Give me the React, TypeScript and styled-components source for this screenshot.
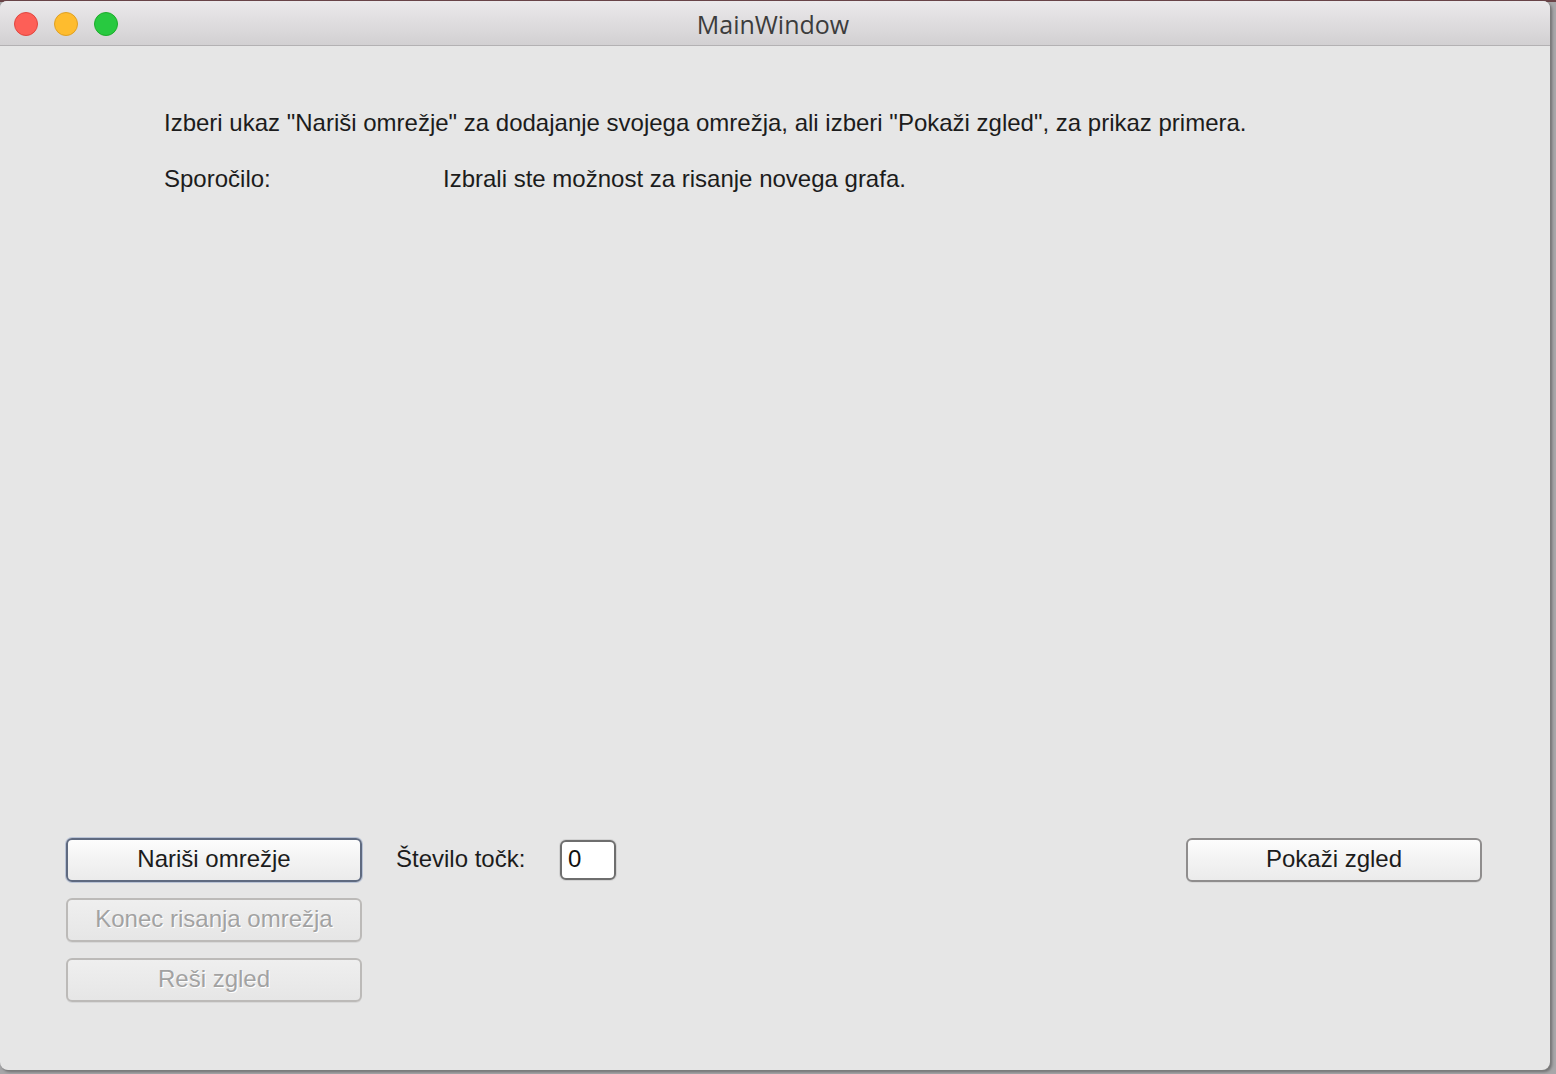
import React from "react";
import styled, { createGlobalStyle } from "styled-components";

const GlobalStyle = createGlobalStyle`
  html, body {
    margin: 0;
    padding: 0;
    width: 1556px;
    height: 1074px;
    overflow: hidden;
    background: #a9a9ab;
  }
  #root { width: 1556px; height: 1074px; }
  * { box-sizing: border-box; }
`;

const Desktop = styled.div`
  width: 1556px;
  height: 1074px;
  background: linear-gradient(#6a4448 0, #6a4448 2px, #a7a7a9 2px);
  position: relative;
  overflow: hidden;
`;

const Window = styled.div`
  position: absolute;
  left: 0;
  top: 1px;
  width: 1550px;
  height: 1069px;
  display: flex;
  flex-direction: column;
  background: #e6e6e6;
  border-radius: 7px 7px 8px 8px;
  box-shadow: 1px 1px 0 #7c7c7c, 2px 2px 3px rgba(0, 0, 0, 0.35);
  overflow: hidden;
  font-family: "Liberation Sans", Arial, sans-serif;
`;

const TitleBar = styled.div`
  height: 45px;
  flex: none;
  display: flex;
  align-items: center;
  position: relative;
  background: linear-gradient(#ebe9eb, #d2d0d2);
  border-bottom: 1px solid #b3b1b3;
`;

const Lights = styled.div`
  display: flex;
  gap: 16px;
  padding-left: 14px;
  padding-top: 1px;
`;

const Light = styled.span<{ $fill: string; $edge: string }>`
  width: 24px;
  height: 24px;
  border-radius: 50%;
  background: ${(p) => p.$fill};
  border: 1px solid ${(p) => p.$edge};
`;

const Title = styled.div`
  position: absolute;
  left: 0;
  right: 0;
  top: 0;
  bottom: 0;
  display: flex;
  align-items: center;
  justify-content: center;
  font-family: "Open Sans", "Liberation Sans", sans-serif;
  font-size: 25px;
  color: #3c3c3c;
  padding-right: 4px;
  padding-top: 1px;
`;

const Content = styled.div`
  flex: 1;
  display: flex;
  flex-direction: column;
  justify-content: space-between;
  padding: 63px 68px 68px 66px;
  color: #1c1c1c;
  font-size: 24px;
`;

const Messages = styled.div`
  display: flex;
  flex-direction: column;
  gap: 28px;
  padding-left: 98px;
`;

const Line = styled.div`
  display: flex;
  line-height: 28px;
  white-space: nowrap;
`;

const LineLabel = styled.span`
  width: 279px;
`;

const Controls = styled.div`
  display: flex;
  align-items: flex-start;
`;

const ButtonStack = styled.div`
  display: flex;
  flex-direction: column;
  gap: 16px;
`;

const PushButton = styled.button<{ $focused?: boolean }>`
  width: 296px;
  height: 44px;
  border-radius: 6px;
  font-family: "Liberation Sans", Arial, sans-serif;
  font-size: 24px;
  padding: 0 0 3px;
  color: #1c1c1c;
  background: linear-gradient(#fdfdfd, #f3f3f3 50%, #ebebeb);
  border: ${(p) => (p.$focused ? "2px solid #5f6a80" : "2px solid #8f8d8d")};
  box-shadow: ${(p) => (p.$focused ? "0 0 0 1px #b9c3d6" : "0 1px 0 rgba(0,0,0,0.06)")};
  &:disabled {
    color: #a2a2a2;
    text-shadow: 1px 1px 0 #ffffff;
    border: 2px solid #bcbab8;
    background: linear-gradient(#efefef, #e6e6e6);
  }
`;

const CountGroup = styled.div`
  display: flex;
  align-items: center;
  height: 44px;
  margin-left: 34px;
`;

const CountLabel = styled.span`
  width: 164px;
  padding-bottom: 3px;
`;

const CountInput = styled.div`
  width: 56px;
  height: 40px;
  border: 2px solid #6e6e6e;
  border-radius: 6px;
  background: #ffffff;
  padding: 3px 0 0 6px;
  font-size: 24px;
  color: #111;
  box-shadow: 0 0 0 1px #d2d2d2;
`;

const Spacer = styled.div`
  flex: 1;
`;

export default function App() {
  return (
    <>
      <GlobalStyle />
      <Desktop>
        <Window>
          <TitleBar>
            <Lights>
              <Light $fill="#fd5f57" $edge="#e0463f" />
              <Light $fill="#febc2e" $edge="#dfa023" />
              <Light $fill="#28c940" $edge="#1dac2b" />
            </Lights>
            <Title>MainWindow</Title>
          </TitleBar>
          <Content>
            <Messages>
              <Line>
                Izberi ukaz "Nariši omrežje" za dodajanje svojega omrežja, ali izberi "Pokaži zgled", za prikaz primera.
              </Line>
              <Line>
                <LineLabel>Sporočilo:</LineLabel>
                <span>Izbrali ste možnost za risanje novega grafa.</span>
              </Line>
            </Messages>
            <Controls>
              <ButtonStack>
                <PushButton $focused>Nariši omrežje</PushButton>
                <PushButton disabled>Konec risanja omrežja</PushButton>
                <PushButton disabled>Reši zgled</PushButton>
              </ButtonStack>
              <CountGroup>
                <CountLabel>Število točk:</CountLabel>
                <CountInput>0</CountInput>
              </CountGroup>
              <Spacer />
              <PushButton>Pokaži zgled</PushButton>
            </Controls>
          </Content>
        </Window>
      </Desktop>
    </>
  );
}
